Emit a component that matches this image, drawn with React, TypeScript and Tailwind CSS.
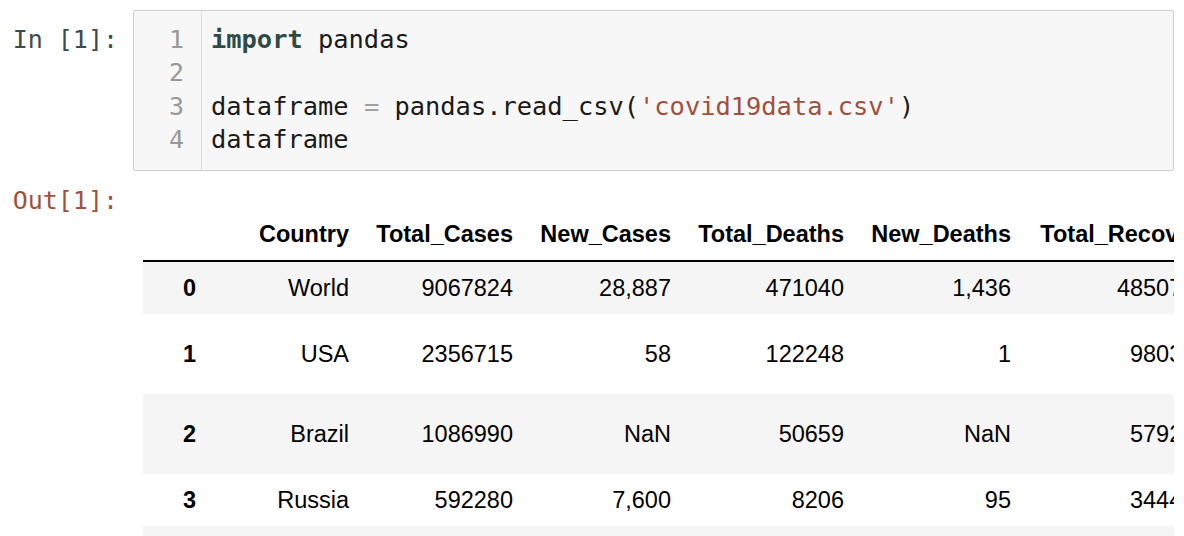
import React from 'react';

const mono = { fontFamily: '"DejaVu Sans Mono", "Liberation Mono", monospace' };
const sans = { fontFamily: '"Liberation Sans", Arial, sans-serif' };

type Row = { idx: string; cells: string[]; h: string; bg: string };

const columns = [
    { name: 'Country', w: 'w-[153px]' },
    { name: 'Total_Cases', w: 'w-[164px]' },
    { name: 'New_Cases', w: 'w-[158px]' },
    { name: 'Total_Deaths', w: 'w-[173px]' },
    { name: 'New_Deaths', w: 'w-[167px]' },
    { name: 'Total_Recovered', w: 'w-[217px]' },
];

const rows: Row[] = [
    { idx: '0', cells: ['World', '9067824', '28,887', '471040', '1,436', '4850776.0'], h: 'h-[52px]', bg: 'bg-[#f5f5f5]' },
    { idx: '1', cells: ['USA', '2356715', '58', '122248', '1', '980367.0'], h: 'h-[80px]', bg: 'bg-white' },
    { idx: '2', cells: ['Brazil', '1086990', 'NaN', '50659', 'NaN', '579226.0'], h: 'h-[80px]', bg: 'bg-[#f5f5f5]' },
    { idx: '3', cells: ['Russia', '592280', '7,600', '8206', '95', '344416.0'], h: 'h-[52px]', bg: 'bg-white' },
    { idx: '', cells: ['', '', '', '', '', ''], h: 'h-[52px]', bg: 'bg-[#f5f5f5]' },
];

export default function App() {
    return (
        <div className="w-[1184px] h-[536px] overflow-hidden bg-white">
            {/* Input cell */}
            <div className="flex pt-[10px]">
                <div
                    className="w-[133px] shrink-0 pr-[15px] pt-[13px] text-right text-[25px] leading-[33.3px] text-[#3a4c4b]"
                    style={mono}
                >
                    In [1]:
                </div>
                <div className="flex w-[1041px] rounded-[2px] border border-[#cfcfcf] bg-[#f7f7f7]">
                    <div
                        className="w-[68px] shrink-0 border-r border-[#dddddd] pr-[17px] pt-[12px] pb-[14px] text-right text-[25px] leading-[33.3px] text-[#999999]"
                        style={mono}
                    >
                        <div>1</div>
                        <div>2</div>
                        <div>3</div>
                        <div>4</div>
                    </div>
                    <div
                        className="pl-[9px] pt-[12px] pb-[14px] text-[25.4px] leading-[33.3px] text-[#1a1a1a] whitespace-pre"
                        style={mono}
                    >
                        <div>
                            <span className="font-bold text-[#2e4a46]">import</span> pandas
                        </div>
                        <div>&nbsp;</div>
                        <div>
                            dataframe <span className="text-[#a0a0a0]">=</span> pandas.read_csv(
                            <span className="text-[#a0503c]">'covid19data.csv'</span>)
                        </div>
                        <div>dataframe</div>
                    </div>
                </div>
            </div>

            {/* Output cell */}
            <div className="flex mt-[13px]">
                <div
                    className="w-[133px] shrink-0 pr-[15px] text-right text-[25px] leading-[33px] text-[#a0523d]"
                    style={mono}
                >
                    Out[1]:
                </div>
                <div className="ml-[10px] mt-[24px] w-[1031px] overflow-hidden text-[23.5px] text-black" style={sans}>
                    <div className="flex h-[54px] w-max items-center border-b-2 border-black font-bold whitespace-nowrap">
                        <div className="w-[65px] shrink-0" />
                        {columns.map((c) => (
                            <div key={c.name} className={`${c.w} shrink-0 pr-[12px] text-right`}>
                                {c.name}
                            </div>
                        ))}
                    </div>
                    {rows.map((r, i) => (
                        <div key={i} className={`flex w-max ${r.h} items-center whitespace-nowrap ${r.bg}`}>
                            <div className="w-[65px] shrink-0 pr-[12px] text-right font-bold">{r.idx}</div>
                            {r.cells.map((v, j) => (
                                <div key={j} className={`${columns[j].w} shrink-0 pr-[12px] text-right`}>
                                    {v}
                                </div>
                            ))}
                        </div>
                    ))}
                </div>
            </div>
        </div>
    );
}
